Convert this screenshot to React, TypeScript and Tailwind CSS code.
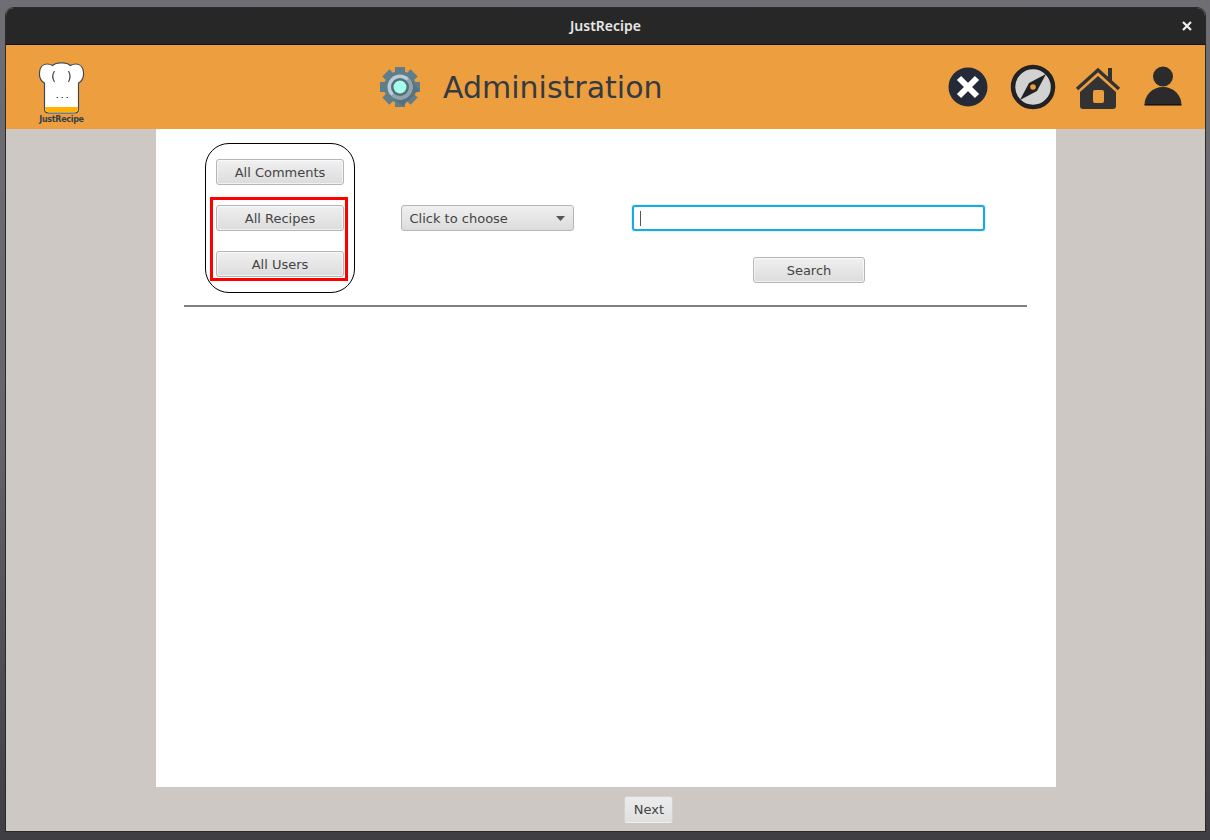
import React from "react";

function Btn({ w, h = "h-[26px]", soft = false, children }: { w: string; h?: string; soft?: boolean; children: React.ReactNode }) {
  return (
    <button
      className={`${w} ${h} flex items-center justify-center rounded-[3px] border pl-[1px] pt-[2px] text-[13px] text-[#444444] ${
        soft
          ? "border-[#d4d0cc] border-b-[#f2f0ee] bg-gradient-to-b from-[#ececec] to-[#e0e0e0]"
          : "border-[#b5b5b5] bg-gradient-to-b from-[#f0f0f0] to-[#dcdcdc] shadow-[inset_0_0_0_1px_rgba(255,255,255,0.6)]"
      }`}
    >
      {children}
    </button>
  );
}

function Logo() {
  return (
    <div className="flex w-[47px] flex-col items-center">
      <svg width="47" height="52" viewBox="0 0 47 52" className="flex-none">
        <path
          d="M6.500 21C-1 17 0 2 9 2Q12 2 14.500 3.500Q18 .5 23.500 1Q29 .5 32.500 3.500Q35 2 38 2C47 2 48 17 40.500 21V47Q40.500 51 36.500 51H10.500Q6.500 51 6.500 47Z"
          fill="#fff"
          stroke="#3d4a55"
          strokeWidth="1.200"
        />
        <path d="M7.200 45H39.800V47Q39.800 50 36.500 50H10.500Q7.200 50 7.200 47Z" fill="#ffb000" />
        <path d="M16.500 9Q13 14.500 16.500 20M30.500 9Q33.500 14.500 30.500 20" fill="none" stroke="#3d4a55" strokeWidth="1.200" />
        <path d="M18.500 35.500h1.500M23.500 35.500h1.500M28.500 35.500h1.500" stroke="#3d4a55" strokeWidth="1.200" />
      </svg>
      <span className="mt-[1px] whitespace-nowrap text-[8px] font-bold leading-[10px] text-[#33404a] tracking-[-0.3px] font-['DejaVu_Sans',sans-serif]">JustRecipe</span>
    </div>
  );
}

function Gear() {
  const teeth = [0, 45, 90, 135, 180, 225, 270, 315];
  return (
    <svg width="42" height="42" viewBox="0 0 42 42">
      {teeth.map((a) => (
        <rect key={a} x="16" y="1" width="10" height="10" fill="#607d8b" transform={`rotate(${a} 21 21)`} />
      ))}
      <circle cx="21" cy="21" r="16" fill="#607d8b" />
      <path d="M30 11 40 24 24 40 11 30z" fill="#516c79" opacity="0.75" />
      <circle cx="21" cy="21" r="12.500" fill="#b9cdd6" />
      <path d="M30 12a12.500 12.500 0 0 1-18 18z" fill="#90a4ae" />
      <circle cx="21" cy="21" r="9" fill="#546e7a" />
      <circle cx="21" cy="21" r="6.500" fill="#a7ffeb" />
    </svg>
  );
}

function CloseIcon() {
  return (
    <svg width="40" height="40" viewBox="0 0 40 40">
      <circle cx="20" cy="20" r="19.500" fill="#252a38" />
      <path d="M11 11 29 29M29 11 11 29" stroke="#fff" strokeWidth="6" />
    </svg>
  );
}

function Compass() {
  return (
    <svg width="46" height="46" viewBox="0 0 46 46">
      <circle cx="23" cy="23" r="20" fill="#d2d2d2" stroke="#222222" strokeWidth="4.500" />
      <path d="M36 10 27 27 10 36 19 19z" fill="#222222" />
      <circle cx="23" cy="23" r="2.800" fill="#ed9f40" />
    </svg>
  );
}

function House() {
  return (
    <svg width="46" height="44" viewBox="0 0 46 44">
      <path d="M33 3h4v14l-4-3.500z" fill="#333333" />
      <path d="M2 24 23 5l21 19" fill="none" stroke="#333333" strokeWidth="3.500" />
      <path d="M5 27 23 11l18 16v14q0 3-3 3H8q-3 0-3-3z" fill="#333333" />
      <rect x="18" y="25" width="11" height="13" rx="2" fill="#ed9f40" />
    </svg>
  );
}

function Person() {
  return (
    <svg width="38" height="40" viewBox="0 0 38 40">
      <circle cx="19" cy="10.500" r="10" fill="#2b2b2b" />
      <path d="M.5 39c0-10 8-18 18.500-18s18.500 8 18.500 18z" fill="#2b2b2b" />
      <rect x=".5" y="38.500" width="37" height="1" fill="#000" />
    </svg>
  );
}

export default function App() {
  return (
    <div className="h-[840px] w-[1210px] bg-gradient-to-b from-[#6f6e74] via-[#66656a] to-[#3f3e42] pl-[6px] pr-[5px] pt-[8px] pb-[9px] font-['DejaVu_Sans',sans-serif]">
      <div className="flex h-[823px] w-[1199px] flex-col overflow-hidden rounded-t-[8px] bg-[#cdc8c4] shadow-[0_0_0_1px_#2a2a2a]">
        <div className="relative flex h-[36px] flex-none items-center justify-center bg-[#272727] pb-[2px] text-[14px] text-[#e8e8e8]">
          <span className="font-['Noto_Sans',sans-serif] font-semibold">JustRecipe</span>
          <span className="absolute right-[12px] top-[10px] flex h-[16px] w-[12px] items-center justify-center">
            <svg width="10" height="10" viewBox="0 0 10 10">
              <path d="M1 1 9 9M9 1 1 9" stroke="#f0f0f0" strokeWidth="2.200" />
            </svg>
          </span>
        </div>
        <div className="h-px flex-none bg-[#111111]" />
        <div className="flex h-[84px] flex-none items-center bg-[#ed9f40]">
          <div className="ml-[32px] mt-[17px] self-start">
            <Logo />
          </div>
          <div className="ml-[294px] flex items-center">
            <Gear />
            <span className="ml-[22px] pt-[2px] text-[30px] leading-none text-[#333a40]">Administration</span>
          </div>
          <div className="ml-auto flex items-center">
            <CloseIcon />
            <div className="ml-[22px]"><Compass /></div>
            <div className="ml-[19px]"><House /></div>
            <div className="ml-[23px] mr-[23px] mt-[-3px]"><Person /></div>
          </div>
        </div>
        <div className="flex min-h-0 flex-1 flex-col items-center">
          <div className="flex h-[658px] w-[900px] flex-none flex-col bg-white pt-[14px]">
            <div className="flex h-[150px] items-start">
              <div className="ml-[49px] flex h-[150px] w-[150px] flex-col items-start rounded-[24px] border border-black pl-[4px] pt-[15px]">
                <div className="ml-[6px]"><Btn w="w-[128px]">All Comments</Btn></div>
                <div className="mt-[12px] flex h-[84px] w-[138px] flex-col items-start justify-between border-[3px] border-[#ff0000] pl-[3px] pt-[5px] pb-[1px]">
                  <Btn w="w-[128px]">All Recipes</Btn>
                  <Btn w="w-[128px]">All Users</Btn>
                </div>
              </div>
              <div className="ml-[46px] mt-[62px] flex h-[26px] w-[173px] items-center justify-between rounded-[3px] border border-[#b5b5b5] bg-gradient-to-b from-[#f0f0f0] to-[#dcdcdc] pl-[8px] pr-[8px] text-[13px] text-[#444444]">
                <span className="pt-[2px]">Click to choose</span>
                <svg width="9" height="5" viewBox="0 0 9 5">
                  <path d="M0 0h9L4.500 5z" fill="#555555" />
                </svg>
              </div>
              <div className="ml-[58px] mt-[62px] flex w-[353px] flex-col items-center">
                <div className="flex h-[26px] w-[353px] items-center rounded-[3px] border-[2px] border-[#1aa8e6] bg-white pl-[6px] shadow-[0_0_0_1px_#dff2fb]">
                  <div className="h-[15px] w-px bg-[#555555]" />
                </div>
                <div className="ml-[1px] mt-[26px]"><Btn w="w-[112px]">Search</Btn></div>
              </div>
            </div>
            <div className="ml-[28px] mt-[12px] h-[2px] w-[843px] bg-[#808080]" />
          </div>
          <div className="flex flex-1 items-center justify-center pl-[86px]">
            <Btn w="w-[49px]" h="h-[27px]" soft>Next</Btn>
          </div>
        </div>
      </div>
    </div>
  );
}
